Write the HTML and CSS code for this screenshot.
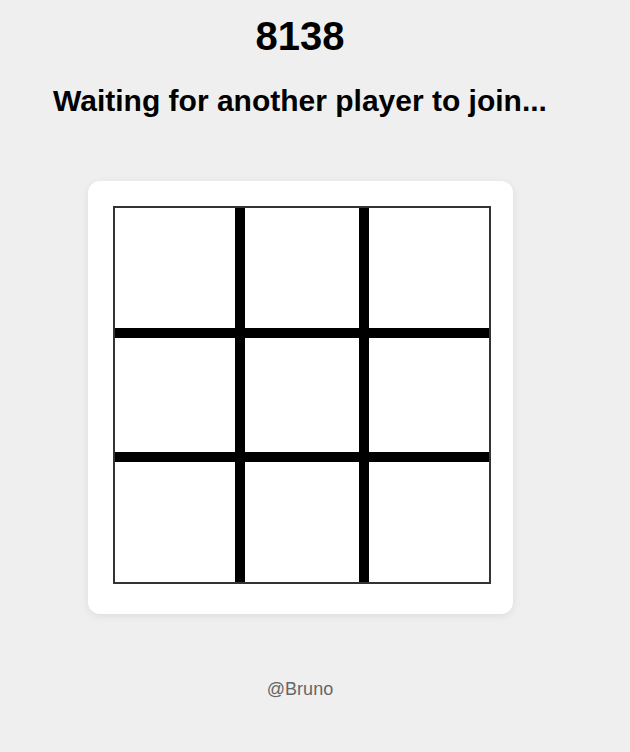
FILE: index.html
```html
<!DOCTYPE html>
<html>
<head>
<meta charset="utf-8">
<link rel="stylesheet" href="styles.css">
</head>
<body>
<div class="page">
  <h1 class="room">8138</h1>
  <h2 class="status">Waiting for another player to join...</h2>
  <div class="card">
    <div class="board">
      <div class="cell c1 r1"></div>
      <div class="cell c2 r1"></div>
      <div class="cell c3 r1"></div>
      <div class="cell c1 r2"></div>
      <div class="cell c2 r2"></div>
      <div class="cell c3 r2"></div>
      <div class="cell c1 r3"></div>
      <div class="cell c2 r3"></div>
      <div class="cell c3 r3"></div>
    </div>
  </div>
  <footer class="footer">@Bruno</footer>
</div>
</body>
</html>
```
FILE: styles.css
```css
html, body {
  margin: 0;
  padding: 0;
  background: #efefef;
  font-family: "Liberation Sans", Arial, sans-serif;
  color: #000;
}
.page {
  width: 600px;
  display: flex;
  flex-direction: column;
  align-items: center;
}
.room {
  margin: 13px 0 0;
  font-size: 40px;
  line-height: 46px;
  font-weight: bold;
}
.status {
  margin: 24px 0 0;
  font-size: 30px;
  line-height: 36px;
  font-weight: bold;
}
.card {
  margin-top: 62px;
  margin-left: 1px;
  background: #fff;
  border-radius: 12px;
  padding: 25px 22px 30px 25px;
  box-shadow: 0 2px 8px rgba(0, 0, 0, 0.08);
}
.board {
  box-sizing: border-box;
  width: 378px;
  height: 378px;
  border: 2px solid #333;
  display: grid;
  grid-template-columns: repeat(3, 1fr);
  grid-template-rows: repeat(3, 1fr);
  background: #fff;
}
.cell {
  box-sizing: border-box;
  background: #fff;
  border: 0 solid #000;
}
.c1 { border-right-width: 5px; }
.c2 { border-left-width: 5px; border-right-width: 5px; }
.c3 { border-left-width: 5px; }
.r1 { border-bottom-width: 5px; }
.r2 { border-top-width: 5px; border-bottom-width: 5px; }
.r3 { border-top-width: 5px; }
.footer {
  margin-top: 64px;
  font-size: 18px;
  line-height: 22px;
  color: #666;
}
```
